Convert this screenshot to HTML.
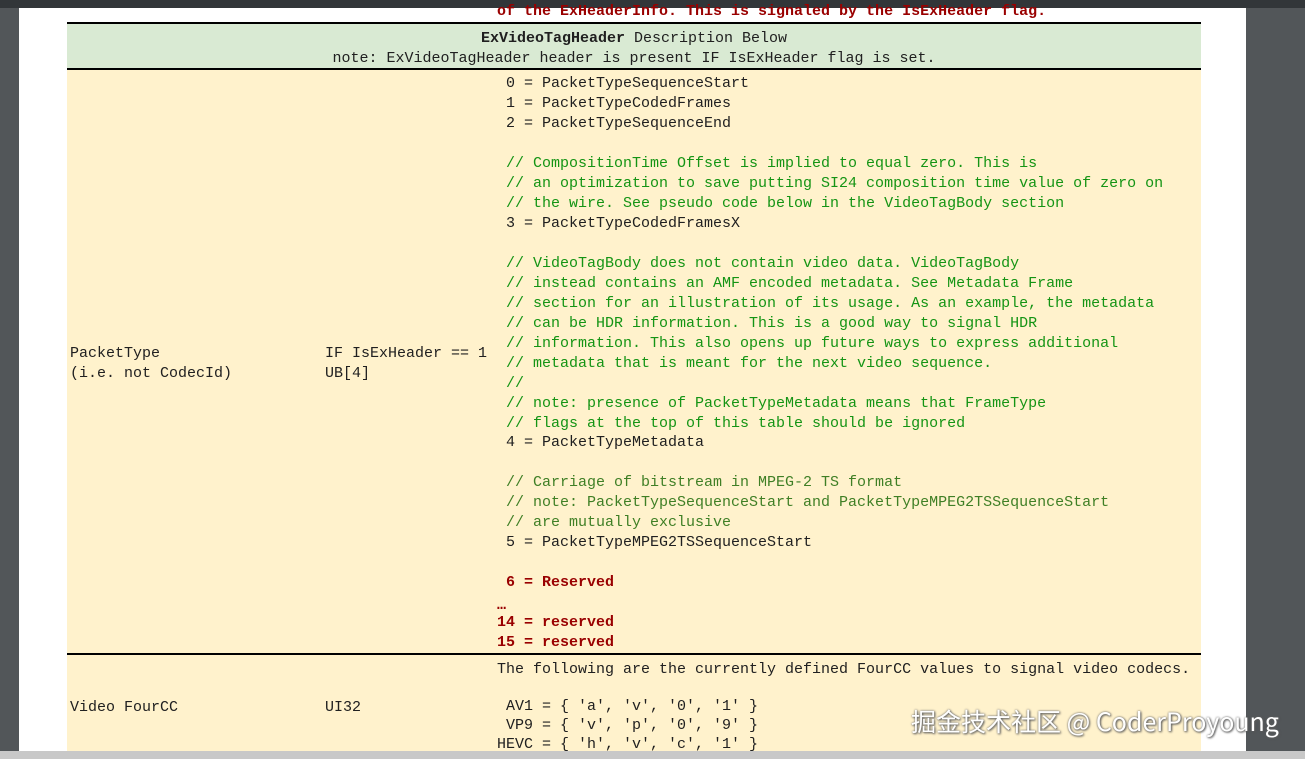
<!DOCTYPE html>
<html><head><meta charset="utf-8"><style>
html,body{margin:0;padding:0;}
body{width:1305px;height:759px;overflow:hidden;background:#525659;position:relative;font-family:"Liberation Mono",monospace;font-size:15px;}
.top{position:absolute;left:0;top:0;width:1305px;height:8px;background:#323639;}
.page{position:absolute;left:19px;top:8px;width:1227px;height:745px;background:#fff;}
.bot{position:absolute;left:0;top:751px;width:1305px;height:8px;background:#c8c8c8;}
.box{position:absolute;left:67px;width:1134px;}
.line{position:absolute;height:2px;left:67px;width:1134px;background:#000;}
.t{position:absolute;white-space:pre;line-height:20px;color:#202020;}
.g{color:#149414;}
.o{color:#3f7f25;}
.r{color:#990000;font-weight:bold;}
.wm{position:absolute;left:911px;top:704px;font-family:"Noto Sans CJK SC",sans-serif;font-size:25px;color:#fff;text-shadow:0 0 2px #666,1px 1px 2px #555;white-space:pre;line-height:34px;}
</style></head><body>
<div class="top"></div>
<div class="page"></div>
<div class="box" style="top:24px;height:44px;background:#d9ead3"></div>
<div class="box" style="top:70px;height:583px;background:#fff2cc"></div>
<div class="box" style="top:655px;height:96px;background:#fff2cc"></div>
<div class="line" style="top:22px"></div>
<div class="line" style="top:68px"></div>
<div class="line" style="top:653px"></div>
<div class="bot"></div>
<div class="t r" style="left:497px;top:2px">of the ExHeaderInfo. This is signaled by the IsExHeader flag.</div>
<div class="t" style="left:67px;width:1134px;text-align:center;top:29px"><b>ExVideoTagHeader</b> Description Below</div>
<div class="t" style="left:67px;width:1134px;text-align:center;top:49px">note: ExVideoTagHeader header is present IF IsExHeader flag is set.</div>
<div class="t" style="left:70px;top:344px">PacketType
(i.e. not CodecId)</div>
<div class="t" style="left:325px;top:344px">IF IsExHeader == 1
UB[4]</div>
<div class="t" style="left:497px;top:74px"> 0 = PacketTypeSequenceStart
 1 = PacketTypeCodedFrames
 2 = PacketTypeSequenceEnd

<span class="g"> // CompositionTime Offset is implied to equal zero. This is
 // an optimization to save putting SI24 composition time value of zero on
 // the wire. See pseudo code below in the VideoTagBody section</span>
 3 = PacketTypeCodedFramesX

<span class="g"> // VideoTagBody does not contain video data. VideoTagBody
 // instead contains an AMF encoded metadata. See Metadata Frame
 // section for an illustration of its usage. As an example, the metadata
 // can be HDR information. This is a good way to signal HDR
 // information. This also opens up future ways to express additional
 // metadata that is meant for the next video sequence.
 //
 // note: presence of PacketTypeMetadata means that FrameType
 // flags at the top of this table should be ignored</span></div>
<div class="t" style="left:497px;top:433px"> 4 = PacketTypeMetadata

<span class="o"> // Carriage of bitstream in MPEG-2 TS format
 // note: PacketTypeSequenceStart and PacketTypeMPEG2TSSequenceStart
 // are mutually exclusive</span>
 5 = PacketTypeMPEG2TSSequenceStart</div>
<div class="t r" style="left:497px;top:573px"> 6 = Reserved</div>
<div class="t r" style="left:497px;top:596px">…</div>
<div class="t r" style="left:497px;top:613px">14 = reserved
15 = reserved</div>
<div class="t" style="left:497px;top:660px">The following are the currently defined FourCC values to signal video codecs.</div>
<div class="t" style="left:70px;top:698px">Video FourCC</div>
<div class="t" style="left:325px;top:698px">UI32</div>
<div class="t" style="left:497px;top:697px;line-height:19px"> AV1 = { 'a', 'v', '0', '1' }
 VP9 = { 'v', 'p', '0', '9' }
HEVC = { 'h', 'v', 'c', '1' }</div>
<div class="bot" style="z-index:5"></div>
<div class="wm">掘金技术社区 @ CoderProyoung</div>
</body></html>
